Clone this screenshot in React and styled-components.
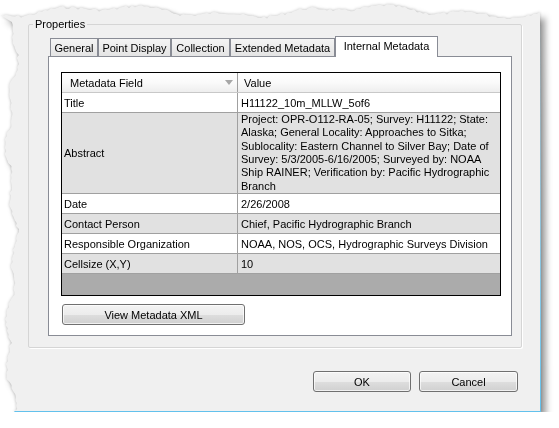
import styled, { createGlobalStyle } from 'styled-components'

const GlobalStyle = createGlobalStyle`
  body {
    margin: 0;
    background: #ffffff;
    font-family: "Liberation Sans", Arial, sans-serif;
    font-size: 11px;
    color: #000;
  }
`

// torn paper edge along the top and the left of the captured dialog
const makeTornEdge = (w, h) => {
  let seed = 7
  const r = () => {
    seed = (seed * 9301 + 49297) % 233280
    return seed / 233280
  }
  const pts = []
  for (let x = 0; x <= w; x += 3) {
    const y = 10 + 4 * Math.sin(x / 41 + 2) + 2.5 * Math.sin(x / 13) + r() * 3
    pts.push(`${x}px ${Math.max(2, Math.min(19, y)).toFixed(1)}px`)
  }
  pts.push(`${w}px ${h}px`)
  for (let y = h; y >= 20; y -= 3) {
    const x = 10 + 4 * Math.sin(y / 31) + 3 * Math.sin(y / 9 + 1) + r() * 3
    pts.push(`${Math.max(2, Math.min(21, x)).toFixed(1)}px ${y}px`)
  }
  return `polygon(${pts.join(', ')})`
}

const TORN = makeTornEdge(541, 412)

const Shadow = styled.div`
  width: 541px;
  filter: drop-shadow(0 0 1.5px rgba(0, 0, 0, 0.22)) drop-shadow(5px 5px 3px rgba(0, 0, 0, 0.38));
`

const Dialog = styled.div`
  width: 541px;
  height: 412px;
  box-sizing: border-box;
  background: #f0f0f0;
  border-right: 1px solid #62c1ec;
  border-bottom: 1px solid #62c1ec;
  clip-path: ${TORN};
  display: flex;
  flex-direction: column;
  padding: 17px 0 0 28px;
`

const GroupBox = styled.fieldset`
  margin: 0;
  padding: 0;
  width: 494px;
  height: 331px;
  box-sizing: border-box;
  border: 1px solid #d5d5d5;
  border-radius: 2px;
  box-shadow: 1px 1px 0 #ffffff;
`

const GroupLabel = styled.legend`
  margin-left: 4px;
  padding: 0 2px;
  font-size: 11px;
  line-height: 14px;
`

const GroupInner = styled.div`
  padding: 5px 9px 11px 19px;
`

const TabStrip = styled.div`
  display: flex;
  align-items: flex-end;
  height: 20px;
  padding-left: 2px;
`

const Tab = styled.div`
  box-sizing: border-box;
  width: ${p => p.$w}px;
  height: ${p => (p.$active ? 21 : 18)}px;
  margin-bottom: ${p => (p.$active ? -1 : 0)}px;
  position: relative;
  z-index: ${p => (p.$active ? 1 : 0)};
  border: 1px solid #898c95;
  border-bottom: none;
  background: ${p => (p.$active ? '#ffffff' : 'linear-gradient(#f4f4f4, #e4e4e4)')};
  display: flex;
  align-items: center;
  justify-content: center;
  padding-bottom: ${p => (p.$active ? 2 : 0)}px;
  white-space: nowrap;
`

const Panel = styled.div`
  box-sizing: border-box;
  width: 464px;
  height: 280px;
  border: 1px solid #898c95;
  background: #ffffff;
  padding: 15px 10px 10px 12px;
  display: flex;
  flex-direction: column;
`

const Table = styled.div`
  box-sizing: border-box;
  height: 224px;
  border: 1px solid #000;
  display: flex;
  flex-direction: column;
`

const Row = styled.div`
  box-sizing: border-box;
  display: flex;
  height: ${p => p.$h || 20}px;
  border-bottom: 1px solid #a0a0a0;
  background: ${p => (p.$shade ? '#e1e1e1' : '#ffffff')};
`

const HeaderRow = styled(Row)`
  background: linear-gradient(#ffffff 0%, #fafafa 50%, #eeeeee 100%);
  border-bottom-color: #c8c8c8;
`

const FieldCell = styled.div`
  box-sizing: border-box;
  width: 176px;
  flex: none;
  border-right: 1px solid #a0a0a0;
  padding-left: ${p => p.$pad || 2}px;
  display: flex;
  align-items: center;
  justify-content: space-between;
  padding-right: 4px;
`

const ValueCell = styled.div`
  flex: 1;
  padding-left: ${p => p.$pad || 3}px;
  display: flex;
  align-items: center;
  white-space: nowrap;
`

const AbstractText = styled.div`
  line-height: 13.33px;
  white-space: nowrap;
`

const Filler = styled.div`
  flex: 1;
  background: #ababab;
`

const Button = styled.button`
  box-sizing: border-box;
  width: ${p => p.$w}px;
  height: 21px;
  margin: 0;
  padding: 0;
  border: 1px solid #707070;
  border-radius: 3px;
  background: linear-gradient(#f3f3f3 0%, #ececec 50%, #dedede 51%, #d0d0d0 100%);
  box-shadow: inset 0 0 0 1px rgba(255, 255, 255, 0.7);
  font-family: "Liberation Sans", Arial, sans-serif;
  font-size: 11px;
  color: #000;
`

const XmlButton = styled(Button)`
  margin: 8px 0 0 1px;
`

const Footer = styled.div`
  display: flex;
  justify-content: flex-end;
  gap: 8px;
  margin-top: 23px;
  padding-right: 22px;
`

const SortArrow = () => (
  <svg width="8" height="5" viewBox="0 0 8 5">
    <path d="M0 0 H8 L4 5 Z" fill="#a7a7a7" />
  </svg>
)

const tabs = [
  { label: 'General', w: 48 },
  { label: 'Point Display', w: 73 },
  { label: 'Collection', w: 59 },
  { label: 'Extended Metadata', w: 105 },
  { label: 'Internal Metadata', w: 103, active: true },
]

const abstractLines = [
  'Project: OPR-O112-RA-05; Survey: H11122; State:',
  'Alaska; General Locality: Approaches to Sitka;',
  'Sublocality: Eastern Channel to Silver Bay; Date of',
  'Survey: 5/3/2005-6/16/2005; Surveyed by: NOAA',
  'Ship RAINER; Verification by: Pacific Hydrographic',
  'Branch',
]

const rows = [
  { field: 'Title', value: 'H11122_10m_MLLW_5of6' },
  { field: 'Abstract', lines: abstractLines, shade: true, h: 81 },
  { field: 'Date', value: '2/26/2008' },
  { field: 'Contact Person', value: 'Chief, Pacific Hydrographic Branch', shade: true },
  { field: 'Responsible Organization', value: 'NOAA, NOS, OCS, Hydrographic Surveys Division' },
  { field: 'Cellsize (X,Y)', value: '10', shade: true },
]

const App = () => (
  <>
    <GlobalStyle />
    <Shadow>
      <Dialog>
        <GroupBox>
          <GroupLabel>Properties</GroupLabel>
          <GroupInner>
            <TabStrip>
              {tabs.map(t => (
                <Tab key={t.label} $w={t.w} $active={t.active}>
                  {t.label}
                </Tab>
              ))}
            </TabStrip>
            <Panel>
              <Table>
                <HeaderRow>
                  <FieldCell $pad={8}>
                    Metadata Field
                    <SortArrow />
                  </FieldCell>
                  <ValueCell $pad={6}>Value</ValueCell>
                </HeaderRow>
                {rows.map(r => (
                  <Row key={r.field} $shade={r.shade} $h={r.h}>
                    <FieldCell>{r.field}</FieldCell>
                    <ValueCell>
                      {r.lines ? (
                        <AbstractText>
                          {r.lines.map((l, i) => (
                            <div key={i}>{l}</div>
                          ))}
                        </AbstractText>
                      ) : (
                        r.value
                      )}
                    </ValueCell>
                  </Row>
                ))}
                <Filler />
              </Table>
              <XmlButton $w={183}>View Metadata XML</XmlButton>
            </Panel>
          </GroupInner>
        </GroupBox>
        <Footer>
          <Button $w={98}>OK</Button>
          <Button $w={99}>Cancel</Button>
        </Footer>
      </Dialog>
    </Shadow>
  </>
)

export default App
